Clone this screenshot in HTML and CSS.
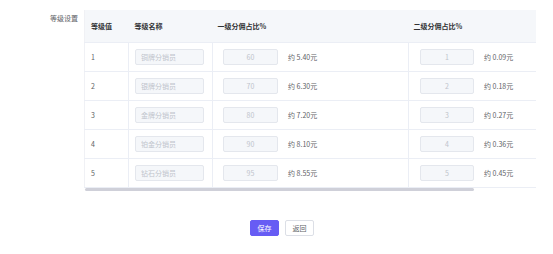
FILE: index.html
```html
<!DOCTYPE html>
<html lang="zh-CN">
<head>
  <meta charset="UTF-8">
  <title>等级设置</title>
  <link rel="stylesheet" href="styles.css">
</head>
<body>
  <div class="form-item">
    <label class="form-label">等级设置</label>
    <div class="table-wrap">
      <table class="level-table">
        <colgroup>
          <col class="col-level">
          <col class="col-name">
          <col class="col-first">
          <col class="col-second">
        </colgroup>
        <thead>
          <tr>
            <th>等级值</th>
            <th>等级名称</th>
            <th class="th-first">一级分佣占比%</th>
            <th class="th-second">二级分佣占比%</th>
          </tr>
        </thead>
        <tbody>
          <tr>
            <td>1</td>
            <td><input class="name-input" placeholder="铜牌分销员" disabled></td>
            <td><input class="rate-input first" value="60" disabled><span class="amount">约 5.40元</span></td>
            <td><input class="rate-input second" value="1" disabled><span class="amount">约 0.09元</span></td>
          </tr>
          <tr>
            <td>2</td>
            <td><input class="name-input" placeholder="银牌分销员" disabled></td>
            <td><input class="rate-input first" value="70" disabled><span class="amount">约 6.30元</span></td>
            <td><input class="rate-input second" value="2" disabled><span class="amount">约 0.18元</span></td>
          </tr>
          <tr>
            <td>3</td>
            <td><input class="name-input" placeholder="金牌分销员" disabled></td>
            <td><input class="rate-input first" value="80" disabled><span class="amount">约 7.20元</span></td>
            <td><input class="rate-input second" value="3" disabled><span class="amount">约 0.27元</span></td>
          </tr>
          <tr>
            <td>4</td>
            <td><input class="name-input" placeholder="铂金分销员" disabled></td>
            <td><input class="rate-input first" value="90" disabled><span class="amount">约 8.10元</span></td>
            <td><input class="rate-input second" value="4" disabled><span class="amount">约 0.36元</span></td>
          </tr>
          <tr>
            <td>5</td>
            <td><input class="name-input" placeholder="钻石分销员" disabled></td>
            <td><input class="rate-input first" value="95" disabled><span class="amount">约 8.55元</span></td>
            <td><input class="rate-input second" value="5" disabled><span class="amount">约 0.45元</span></td>
          </tr>
        </tbody>
      </table>
      <div class="scroll-bar"><div class="scroll-thumb"></div></div>
    </div>
  </div>

  <div class="actions">
    <button class="btn btn-primary">保存</button>
    <button class="btn btn-default">返回</button>
  </div>
</body>
</html>
```

FILE: styles.css
```css
body {
  margin: 0;
  font-family: "Noto Sans CJK SC", "Noto Sans", sans-serif;
  font-size: 7px;
  color: #606266;
  background-color: #ffffff;
}
.form-item {
  display: flex;
  padding-top: 10px;
}
.form-label {
  width: 78px;
  padding-right: 6px;
  text-align: right;
  line-height: 17px;
  color: #606266;
}
.table-wrap {
  width: 451px;
}
.level-table {
  width: 451px;
  table-layout: fixed;
  border-collapse: collapse;
  border-left: 1px solid #f0f1f5;
}
.col-level { width: 44px; }
.col-name { width: 84px; }
.col-first { width: 196px; }
.col-second { width: 127px; }
th {
  height: 32px;
  padding: 0 6px;
  text-align: left;
  font-weight: 600;
  color: #303133;
  background-color: #f5f7fa;
  border-bottom: 1px solid #ebeef5;
}
.level-table th.th-first,
.level-table th.th-second {
  padding-left: 5px;
}
td {
  height: 28px;
  padding: 0 6px;
  border-bottom: 1px solid #ebeef5;
  border-right: 1px solid #ebeef5;
  white-space: nowrap;
}
td:last-child {
  border-right: none;
}
input {
  box-sizing: border-box;
  height: 16px;
  padding: 0 5px;
  font-family: inherit;
  font-size: 7px;
  color: #c0c4cc;
  background-color: #f5f7fa;
  border: 1px solid #e4e7ed;
  border-radius: 2px;
  vertical-align: middle;
}
input::placeholder {
  color: #c0c4cc;
}
.name-input {
  width: 69px;
}
.rate-input {
  width: 55px;
  text-align: center;
}
.rate-input.first {
  margin-left: 4px;
}
.rate-input.second {
  width: 54px;
  margin-left: 5px;
}
.amount {
  margin-left: 10px;
  vertical-align: middle;
}
.scroll-bar {
  height: 3px;
  padding-left: 1px;
}
.scroll-thumb {
  width: 389px;
  height: 3px;
  border-radius: 2px;
  background-color: #cfd0d9;
}
.actions {
  display: flex;
  gap: 6px;
  padding: 29px 0 0 250px;
}
.btn {
  width: 29px;
  height: 16px;
  padding: 0;
  font-family: inherit;
  font-size: 7px;
  border-radius: 2px;
  cursor: pointer;
}
.btn-primary {
  color: #ffffff;
  background-color: #675cf4;
  border: 1px solid #675cf4;
}
.btn-default {
  color: #606266;
  background-color: #ffffff;
  border: 1px solid #dcdfe6;
}
```
